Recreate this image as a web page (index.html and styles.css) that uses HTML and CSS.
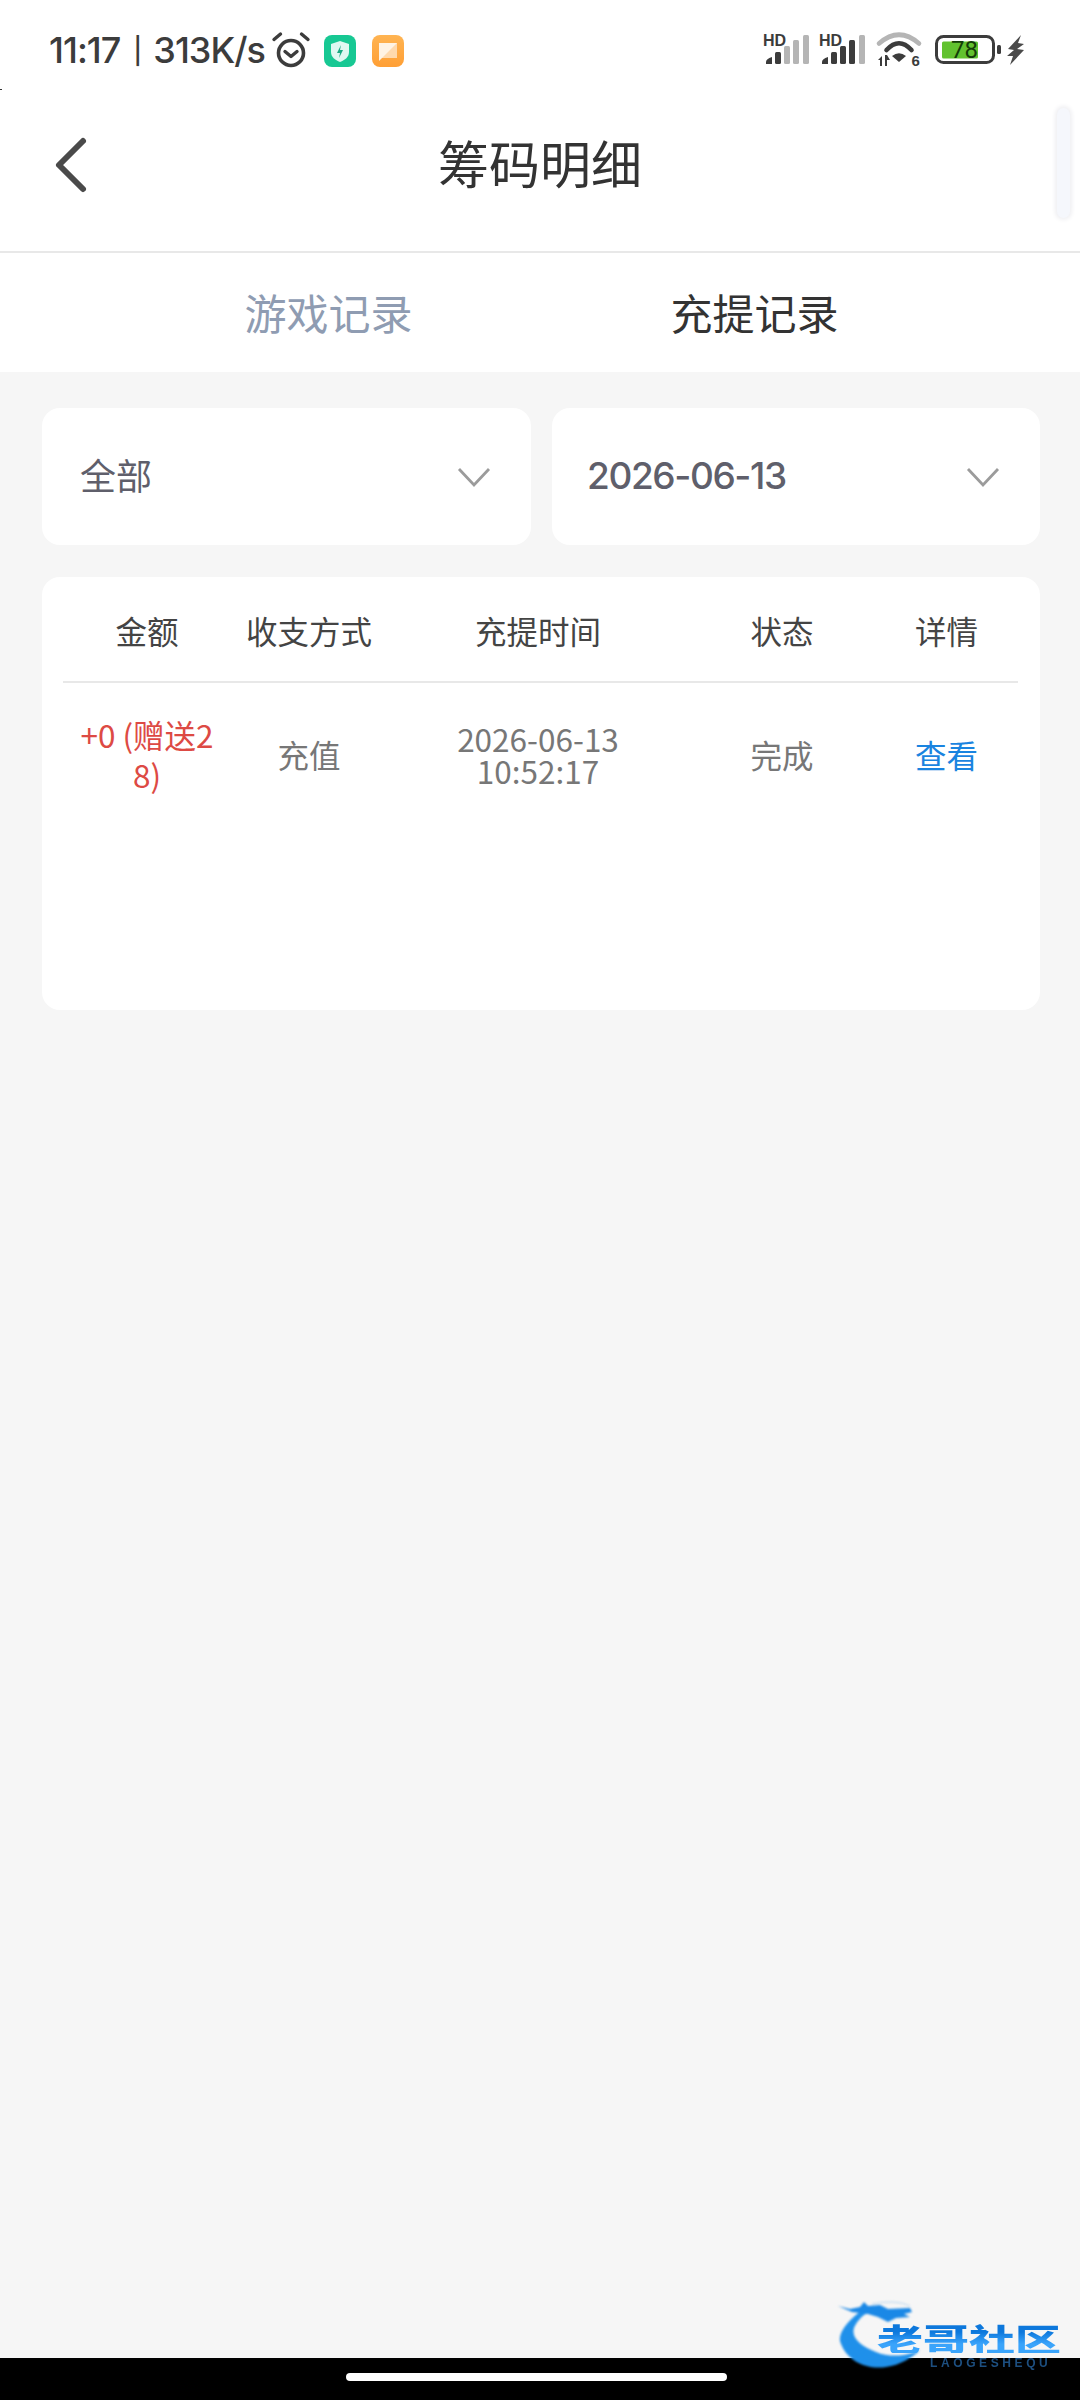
FILE: index.html
```html
<!DOCTYPE html>
<html lang="zh-CN">
<head>
<meta charset="utf-8">
<title>筹码明细</title>
<link rel="stylesheet" href="styles.css">
</head>
<body>
<div class="page">
  <i class="speck"></i>
  <header class="top">
    <div class="status">
      <span class="clock">11:17<span class="sep">|</span>313K/s</span>
      <svg class="ic-alarm" viewBox="0 0 40 36" width="40" height="36"><circle cx="20" cy="21" r="12.500" fill="none" stroke="#3c3c3c" stroke-width="3.6"/><path d="M14 19.500l6 5 6-5" fill="none" stroke="#3c3c3c" stroke-width="3.4" stroke-linecap="round" stroke-linejoin="round"/><path d="M3 7.500 9.500 2M37 7.500 30.500 2" fill="none" stroke="#3c3c3c" stroke-width="3.4" stroke-linecap="round"/></svg>
      <svg class="ic-app" viewBox="0 0 32 32" width="32" height="32"><rect width="32" height="32" rx="8" fill="#17c893"/><path d="M16 6l9 3v8c0 5-4 8-9 10-5-2-9-5-9-10V9z" fill="#dff8f1"/><path d="M17 10l-4 8h3l-1 5 4-8h-3z" fill="#17a981"/></svg>
      <svg class="ic-app ic-app-2" viewBox="0 0 32 32" width="32" height="32"><defs><linearGradient id="og" x1="0" y1="0" x2="0" y2="1"><stop offset="0" stop-color="#ffb452"/><stop offset="1" stop-color="#ff9f35"/></linearGradient></defs><rect width="32" height="32" rx="8" fill="url(#og)"/><path d="M7 8h18v15H7z" fill="#ffd9ad"/><path d="M7 8h18L7 26z" fill="#fff3e4"/></svg>
      <div class="status-right">
        <svg class="ic-sig" viewBox="0 0 46 32" width="46" height="32"><text x="0" y="12" class="hd">HD</text><path d="M3 28q0-3 6-5v7H3z" fill="#3c3c3c"/><rect x="12" y="18" width="6" height="12" rx="1.500" fill="#3c3c3c"/><rect x="21" y="12" width="6" height="18" rx="1.500" fill="#b5b5b5"/><rect x="30" y="6" width="6" height="24" rx="1.500" fill="#b5b5b5"/><rect x="40" y="1" width="6" height="29" rx="1.500" fill="#b5b5b5"/></svg>
        <svg class="ic-sig" viewBox="0 0 46 32" width="46" height="32"><text x="0" y="12" class="hd">HD</text><path d="M3 28q0-3 6-5v7H3z" fill="#3c3c3c"/><rect x="12" y="18" width="6" height="12" rx="1.500" fill="#3c3c3c"/><rect x="21" y="12" width="6" height="18" rx="1.500" fill="#3c3c3c"/><rect x="30" y="6" width="6" height="24" rx="1.500" fill="#3c3c3c"/><rect x="40" y="1" width="6" height="29" rx="1.500" fill="#b5b5b5"/></svg>
        <svg class="ic-wifi" viewBox="0 0 46 34" width="46" height="34"><path d="M2 10.500Q22-7 42 10.500" fill="none" stroke="#b5b5b5" stroke-width="4.600" stroke-linecap="round"/><path d="M9.500 17Q22 3.500 34.500 17" fill="none" stroke="#3c3c3c" stroke-width="4.600" stroke-linecap="round"/><path d="M15 23Q22 17.500 29 23L22 29z" fill="#3c3c3c"/><path d="M1 27l4-4v10H3v-6zM8 22h2l3 5h-3v6H8z" fill="#3c3c3c"/><text x="34.500" y="33" class="six">6</text></svg>
        <svg class="ic-batt" viewBox="0 0 66 30" width="66" height="30"><rect x="1.500" y="1.500" width="57" height="26" rx="7" fill="#fff" stroke="#3c3c3c" stroke-width="3"/><rect x="7" y="6.500" width="36" height="17" rx="1.500" fill="#62c22f"/><rect x="62" y="10" width="4" height="9" rx="1.500" fill="#3c3c3c"/><text x="29.500" y="23" class="pct">78</text></svg>
        <svg class="ic-bolt" viewBox="0 0 18 30" width="18" height="30"><path d="M14 0 1 14l6 1-7 6h6L3 30l14-15-7-1 7-5-6-1z" fill="#4a4a4a"/></svg>
      </div>
    </div>
    <div class="nav">
      <svg class="back" viewBox="0 0 34 56" width="34" height="56"><path d="M29 4 5 28l24 24" fill="none" stroke="#4a4a4a" stroke-width="6" stroke-linecap="round" stroke-linejoin="round"/></svg>
      <h1 class="title">筹码明细</h1>
      <div class="scroll-thumb"></div>
    </div>
  </header>

  <nav class="tabs">
    <span class="tab">游戏记录</span>
    <span class="tab tab-on">充提记录</span>
  </nav>

  <main class="content">
    <div class="filters">
      <div class="select"><span class="sel-cn">全部</span><svg viewBox="0 0 34 22" width="34" height="22"><path d="M2 3l15 16L32 3" fill="none" stroke="#9b9b9b" stroke-width="2.800"/></svg></div>
      <div class="select"><span class="date">2026-06-13</span><svg viewBox="0 0 34 22" width="34" height="22"><path d="M2 3l15 16L32 3" fill="none" stroke="#9b9b9b" stroke-width="2.800"/></svg></div>
    </div>
    <section class="card">
      <div class="grid head">
        <span>金额</span><span>收支方式</span><span>充提时间</span><span>状态</span><span>详情</span>
      </div>
      <div class="grid row">
        <span class="amount">+0 (赠送28)</span>
        <span>充值</span>
        <span class="time">2026-06-13<br>10:52:17</span>
        <span>完成</span>
        <span class="link">查看</span>
      </div>
    </section>
  </main>

  <footer class="navbar"><i class="pill"></i></footer>

  <div class="logo">
    <svg class="dragon" viewBox="0 0 100 80" width="100" height="80"><path d="M27 8C10 20-2 34 3 44c7 18 27 26 45 23 14-2 26-9 34-17-12 6-30 8-44 2C22 46 10 36 18 24c4-6 8-10 14-12z" fill="#1f90ea"/><path d="M0 6l12 3 10-2 4-5 4 4 12-1 8 4 22-1 2 4-8 2 6 3-14 1-8 4-10-5-10-3-16-2z" fill="#1a88e6"/><path d="M34 4q24-5 38 2" fill="none" stroke="#b6d4ee" stroke-width="1"/></svg>
    <span class="logo-cn">老哥社区</span>
    <span class="logo-en">LAOGESHEQU</span>
  </div>
</div>
</body>
</html>
```

FILE: styles.css
```css
* { box-sizing: border-box; }
html, body { margin: 0; padding: 0; }
body {
  font-family: "Noto Sans CJK SC", "Noto Sans", sans-serif;
  background: #f6f6f6;
  color: #333;
}
svg { overflow: visible; }
.page {
  position: relative;
  width: 1080px;
  height: 2400px;
  display: flex;
  flex-direction: column;
  overflow: hidden;
}
.speck { position: absolute; left: 0; top: 89px; width: 2px; height: 1px; background: #333; }
.top { background: #fff; border-bottom: 2px solid #e8e8e8; height: 253px; }
.status {
  height: 100px;
  padding: 0 55px 0 49px;
  display: flex;
  align-items: center;
}
.clock {
  font-family: Inter, Roboto, sans-serif;
  font-size: 36px;
  font-weight: 500;
  line-height: 44px;
  color: #3c3c3c;
  letter-spacing: -1px;
  white-space: nowrap;
}
.sep { font-size: 26px; margin: 0 12px 0 13px; vertical-align: 3px; line-height: 1; }
.ic-alarm { margin-left: 6px; }
.ic-app { margin-left: 13px; margin-top: 2px; }
.ic-app-2 { margin-left: 16px; }
.status-right { margin-left: auto; display: flex; align-items: center; }
.ic-sig { margin-right: 10px; }
.ic-wifi { margin: 0 12px 0 2px; }
.ic-batt { margin-right: 6px; }
.hd { font: 700 16px "Liberation Sans", sans-serif; fill: #3c3c3c; }
.six { font: 700 15px "Liberation Sans", sans-serif; fill: #3c3c3c; }
.pct { font: 400 24px Roboto, sans-serif; fill: #133d08; text-anchor: middle; }

.nav {
  position: relative;
  height: 151px;
  display: flex;
  align-items: center;
  justify-content: center;
}
.back { position: absolute; left: 54px; top: 37px; }
.title { margin: 0; font-size: 51px; font-weight: 400; color: #333; line-height: 1; margin-top: -26px; }
.scroll-thumb {
  position: absolute;
  right: 10px;
  top: 8px;
  width: 13px;
  height: 110px;
  border-radius: 7px;
  background: #f5f7fc;
  box-shadow: 0 0 4px 2px #efeff2;
}
.tabs {
  height: 119px;
  background: #fff;
  display: flex;
  align-items: center;
  justify-content: center;
  gap: 258px;
  font-size: 42px;
  padding: 0 0 2px 3px;
}
.tab { color: #8f9cb2; }
.tab-on { color: #333; }

.content { flex: 1; padding: 36px 40px 0 42px; }
.filters { display: grid; grid-template-columns: 489px 488px; gap: 21px; }
.select {
  height: 137px;
  background: #fff;
  border-radius: 18px;
  padding: 0 40px 0 38px;
  display: flex;
  align-items: center;
  justify-content: space-between;
  font-size: 36px;
  color: #5f5f6b;
}
.sel-cn { padding-bottom: 6px; }
.date {
  font-family: Inter, Roboto, sans-serif;
  font-size: 37px;
  font-weight: 500;
  letter-spacing: -1.4px;
  margin-left: -3px;
  padding-bottom: 2px;
}
.card {
  margin-top: 32px;
  height: 433px;
  background: #fff;
  border-radius: 18px;
  padding: 0 22px 0 21px;
  font-size: 31.500px;
}
.grid { display: grid; grid-template-columns: 168px 156px 302px 186px 143px; text-align: center; align-items: center; }
.head { height: 106px; border-bottom: 2px solid #e8e8e8; color: #444; padding-top: 2px; }
.row { height: 142px; color: #777; }
.amount { color: #dd4a44; padding: 0 12px; line-height: 40px; word-break: break-all; }
.time { line-height: 32px; }
.link { color: #1a84e0; }

.navbar {
  height: 42px;
  background: #000;
  display: flex;
  align-items: center;
  justify-content: center;
  padding: 0 8px 4px 0;
}
.pill { display: block; width: 381px; height: 8px; border-radius: 4px; background: #fff; }

.logo { position: absolute; left: 0; top: 0; width: 1080px; height: 2400px; pointer-events: none; }
.dragon { position: absolute; left: 838px; top: 2300px; filter: blur(0.8px); }
.logo-cn {
  position: absolute;
  left: 877px;
  top: 2315px;
  font-size: 46px;
  font-weight: 900;
  line-height: 46px;
  transform: scaleY(0.66);
  white-space: nowrap;
  background: linear-gradient(#0d78dc 30%, #3aa4fb 70%);
  -webkit-background-clip: text;
  background-clip: text;
  color: transparent;
  filter: blur(0.7px);
}
.logo-en {
  position: absolute;
  left: 930px;
  top: 2356px;
  font: 700 12px "Liberation Sans", sans-serif;
  letter-spacing: 3.600px;
  color: #1d4f80;
  filter: blur(0.5px);
}
```
